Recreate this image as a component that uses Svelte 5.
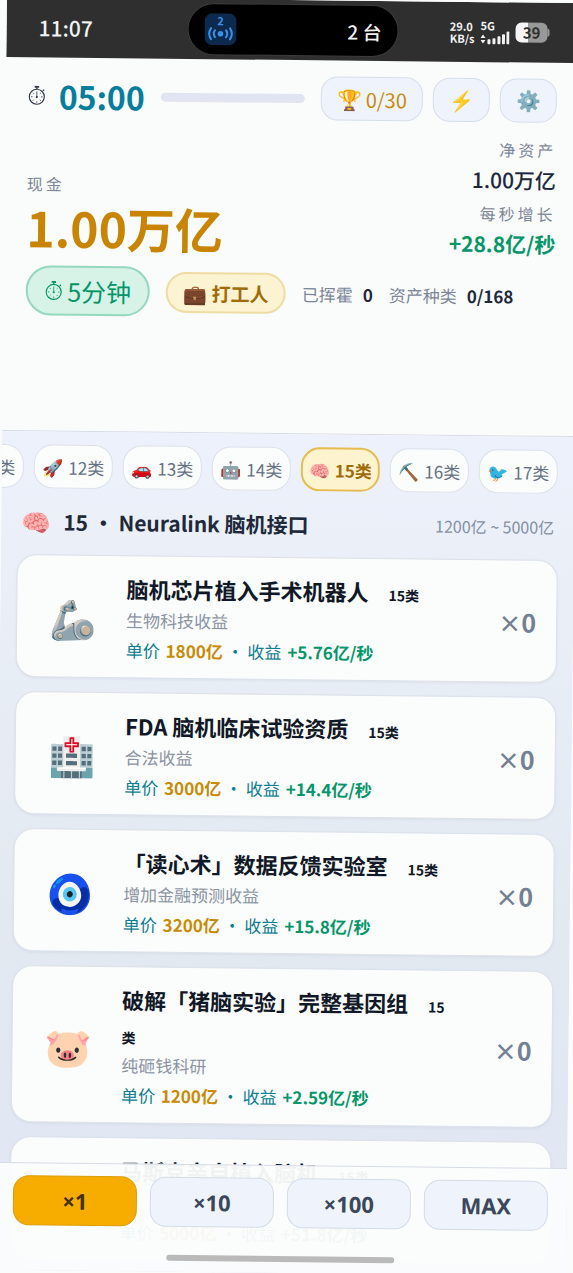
<script>
	const tabs = [
		{ id: 11, icon: '🛰️' },
		{ id: 12, icon: '🚀' },
		{ id: 13, icon: '🚗' },
		{ id: 14, icon: '🤖' },
		{ id: 15, icon: '🧠' },
		{ id: 16, icon: '⛏️' },
		{ id: 17, icon: '🐦' },
	];

	const assets = [
		{ icon: '🦾', name: '脑机芯片植入手术机器人', note: '生物科技收益', price: '1800亿', income: '+5.76亿/秒' },
		{ icon: '🏥', name: 'FDA 脑机临床试验资质', note: '合法收益', price: '3000亿', income: '+14.4亿/秒' },
		{ icon: '🧿', name: '「读心术」数据反馈实验室', note: '增加金融预测收益', price: '3200亿', income: '+15.8亿/秒' },
		{ icon: '🐷', name: '破解「猪脑实验」完整基因组', note: '纯砸钱科研', price: '1200亿', income: '+2.59亿/秒' },
		{ icon: '', name: '马斯克亲自植入脑机', note: '', price: '5000亿', income: '+51.8亿/秒' },
	];

	const amounts = ['×1', '×10', '×100', 'MAX'];

	let activeTab = $state(15);
	let amount = $state('×1');
</script>

{#snippet stopwatch()}
	<svg class="stopwatch" viewBox="0 0 18 20" fill="none" stroke="currentColor" aria-hidden="true">
		<circle cx="9" cy="11.5" r="7.5" stroke-width="1.2" />
		<path d="M9 4V2M15 5.5l1.2-1.2" stroke-width="1.4" />
		<path d="M6.8 1.5h4.4" stroke-width="1.8" />
		<path d="M9 6v5.500M9 16v1.500M3.200 11.500h1.500M13.300 11.500h1.500M5 7.500l1 1M13 7.500l-1 1M5 15.500l1-1M13 15.500l-1-1" stroke-width="0.8" />
		<circle cx="9" cy="11.8" r="1.1" fill="currentColor" stroke="none" />
	</svg>
{/snippet}

<div class="phone" lang="zh-CN">
	<div class="status">
		<span class="clock">11:07</span>
		<div class="island">
			<svg class="hotspot" viewBox="0 0 32 32" aria-hidden="true">
				<rect width="32" height="32" rx="8" fill="#0b2a4d" />
				<text x="16" y="12" text-anchor="middle" font-size="11" font-weight="700" fill="#3b8fe8">2</text>
				<g fill="none" stroke="#3b8fe8" stroke-width="2" stroke-linecap="round">
					<path d="M10.5 17a6 6 0 0 0 0 7M21.5 17a6 6 0 0 1 0 7M6.500 15a10 10 0 0 0 0 11M25.500 15a10 10 0 0 1 0 11" />
				</g>
				<circle cx="16" cy="20.5" r="2.8" fill="#3b8fe8" />
			</svg>
			<span>2 台</span>
		</div>
		<div class="radio">
			<span class="speed">29.0<br />KB/s</span>
			<div class="signal">
				<span>5G</span>
				<svg viewBox="0 0 29 14" fill="#f2f2f2" aria-hidden="true">
					<path d="M0 7L2.5 3.500L5 7zM0 9L2.500 12.500L5 9z" />
					<rect x="7" y="8" width="3" height="5" rx="1" />
					<rect x="12" y="7" width="3" height="6" rx="1" />
					<rect x="17" y="5" width="3" height="8" rx="1" />
					<rect x="21.5" y="3" width="3" height="10" rx="1" />
					<rect x="26" y="0" width="3" height="13" rx="1" />
				</svg>
			</div>
			<span class="battery">39</span>
		</div>
	</div>

	<header>
		<div class="timer-row">
			{@render stopwatch()}
			<strong class="timer">05:00</strong>
			<div class="track"></div>
			<button class="tool trophy"><span class="emoji">🏆</span>0/30</button>
			<button class="tool" aria-label="加速"><span class="emoji">⚡</span></button>
			<button class="tool" aria-label="设置"><span class="emoji">⚙️</span></button>
		</div>

		<div class="money">
			<div class="cash">
				<span class="label">现金</span>
				<strong>1.00万亿</strong>
			</div>
			<div class="worth">
				<span class="label">净资产</span>
				<strong>1.00万亿</strong>
				<span class="label">每秒增长</span>
				<strong class="green">+28.8亿/秒</strong>
			</div>
		</div>

		<div class="badges">
			<span class="mode">{@render stopwatch()}5分钟</span>
			<span class="rank"><span class="emoji">💼</span>打工人</span>
			<span class="stat">已挥霍<b>0</b></span>
			<span class="stat">资产种类<b>0/168</b></span>
		</div>
	</header>

	<main>
		<nav>
			{#each tabs as tab}
				<button class="tab" class:active={tab.id === activeTab} onclick={() => (activeTab = tab.id)}>
					<span class="emoji">{tab.icon}</span>{tab.id}类
				</button>
			{/each}
		</nav>

		<div class="heading">
			<span class="emoji">🧠</span>
			<h2>15 ・ Neuralink 脑机接口</h2>
			<span class="range">1200亿 ~ 5000亿</span>
		</div>

		<div class="list">
			{#each assets as asset}
				<article>
					<span class="emoji">{asset.icon}</span>
					<div class="info">
						<h3>{asset.name}<small>15类</small></h3>
						<p class="note">{asset.note}</p>
						<p class="price">单价 <b>{asset.price}</b> ・ 收益 <b class="green">{asset.income}</b></p>
					</div>
					<span class="count"><i>×</i>0</span>
				</article>
			{/each}
		</div>
	</main>

	<footer>
		<div class="amounts">
			{#each amounts as a}
				<button class:active={a === amount} onclick={() => (amount = a)}>{a}</button>
			{/each}
		</div>
		<div class="home"></div>
	</footer>
</div>

<style>
	:global(body) {
		background: #fafbfb;
		overflow: hidden;
	}

	/* the whole device leans slightly to the right */
	.phone {
		position: relative;
		display: flex;
		flex-direction: column;
		height: 100vh;
		overflow: hidden;
		transform: rotate(0.62deg);
		background: #fafbfb;
		color: #1e293b;
		font-family: 'Noto Sans CJK SC', 'Noto Sans', sans-serif;
	}

	button {
		font-family: inherit;
		padding: 0;
		cursor: pointer;
	}

	h2, h3, p {
		margin: 0;
	}

	.green {
		color: #059669;
	}

	.emoji {
		line-height: 1;
	}

	.stopwatch {
		flex: none;
		width: 18px;
		height: 20px;
	}

	/* status bar */
	.status {
		flex: none;
		display: grid;
		grid-template-columns: 1fr auto 1fr;
		align-items: center;
		height: 60px;
		padding: 0 32px;
		background: #2f2f2f;
		color: #f2f2f2;
	}

	.clock {
		font-size: 21px;
		line-height: 32px;
		font-weight: 500;
	}

	.island {
		box-sizing: border-box;
		display: flex;
		align-items: center;
		justify-content: space-between;
		width: 209px;
		height: 50px;
		padding: 0 16px;
		border-radius: 25px;
		background: #000;
		box-shadow: 0 0 0 1px #3a3a3a;
		font-size: 19px;
		font-weight: 500;
	}

	.hotspot {
		width: 32px;
		height: 32px;
	}

	.radio {
		display: flex;
		align-items: center;
		justify-content: flex-end;
		gap: 6px;
		font-size: 11px;
		line-height: 12px;
		font-weight: 700;
	}

	.signal {
		display: flex;
		flex-direction: column;
	}

	.signal svg {
		width: 29px;
		height: 14px;
	}

	.battery {
		position: relative;
		width: 32px;
		border-radius: 6px;
		background: linear-gradient(90deg, #f5f5f5 39%, #989898 39%);
		color: #2f2f2f;
		font-size: 15px;
		line-height: 20px;
		text-align: center;
	}

	.battery::after {
		content: '';
		position: absolute;
		top: 6px;
		right: -2px;
		width: 2px;
		height: 8px;
		border-radius: 0 2px 2px 0;
		background: #989898;
	}

	/* summary */
	header {
		flex: none;
		box-sizing: border-box;
		min-height: 374px;
		padding: 16px 22px;
		border-bottom: 1px solid #d6dce6;
	}

	.timer-row {
		display: flex;
		align-items: center;
		gap: 10px;
	}

	.timer-row .stopwatch {
		margin-right: 3px;
		color: #333c48;
	}

	.timer {
		color: #067d9c;
		font-size: 32px;
		line-height: 44px;
	}

	.track {
		flex: 1;
		height: 9px;
		margin: 0 6px;
		border-radius: 5px;
		background: #e0e5f1;
	}

	.tool {
		display: flex;
		align-items: center;
		justify-content: center;
		gap: 4px;
		box-sizing: border-box;
		width: 57px;
		height: 44px;
		border: 1px solid #d5dfea;
		border-radius: 17px;
		background: #eff3fb;
		font-size: 20px;
	}

	.trophy {
		width: 102px;
		color: #c98a04;
	}

	.money {
		display: flex;
		justify-content: space-between;
		align-items: flex-end;
		margin-top: 13px;
	}

	.cash,
	.worth {
		display: flex;
		flex-direction: column;
	}

	.cash {
		margin-bottom: 3px;
	}

	.label {
		color: #7c8799;
		font-size: 16px;
		line-height: 28px;
		letter-spacing: 3px;
	}

	.cash strong {
		color: #c98404;
		font-size: 48px;
		line-height: 58px;
	}

	.worth {
		align-items: flex-end;
	}

	.worth strong {
		margin-bottom: 4px;
		font-size: 21px;
		line-height: 32px;
		font-weight: 500;
	}

	.worth .green {
		font-weight: 700;
	}

	.badges {
		display: flex;
		align-items: center;
		gap: 16px;
		margin-top: 7px;
	}

	.mode,
	.rank {
		display: flex;
		align-items: center;
		justify-content: center;
		gap: 5px;
		box-sizing: border-box;
		border-radius: 25px;
	}

	.mode {
		width: 124px;
		height: 50px;
		border: 2px solid #94d8c0;
		background: #d7f3e7;
		color: #059669;
		font-size: 25px;
	}

	.rank {
		width: 120px;
		height: 41px;
		border: 2px solid #efdca4;
		background: #fcf3d2;
		color: #a16c07;
		font-size: 19px;
		font-weight: 700;
	}

	.stat {
		color: #7c8799;
		font-size: 17px;
	}

	.stat b {
		margin-left: 10px;
		color: #1e293b;
	}

	/* asset list */
	main {
		flex: 1;
		min-height: 0;
		overflow: hidden;
		background: linear-gradient(#edf1fb, #e9eef7 20%, #e2e9f1 60%, #e1e6f4);
	}

	nav {
		display: flex;
		justify-content: flex-end;
		gap: 10px;
		padding: 13px 17px 0;
		overflow: hidden;
	}

	.tab {
		flex: none;
		display: flex;
		align-items: center;
		justify-content: center;
		gap: 5px;
		box-sizing: border-box;
		width: 79px;
		height: 44px;
		border: 1px solid #dbe1ea;
		border-radius: 19px;
		background: #fbfcfc;
		color: #667285;
		font-size: 17px;
	}

	.tab.active {
		border: 2px solid #e6bc50;
		background: #fdf3cf;
		color: #a16c07;
		font-weight: 700;
	}

	.heading {
		display: flex;
		align-items: center;
		gap: 12px;
		padding: 17px 20px;
	}

	.heading .emoji {
		width: 30px;
		font-size: 24px;
	}

	h2 {
		flex: 1;
		font-size: 21px;
		line-height: 32px;
	}

	.range {
		color: #8490a2;
		font-size: 16px;
	}

	.list {
		display: flex;
		flex-direction: column;
		gap: 14px;
		padding: 0 16px;
	}

	article {
		display: flex;
		align-items: center;
		padding: 15px 20px 13px 32px;
		border: 1px solid #dce2ea;
		border-radius: 20px;
		background: #fbfcfc;
		box-shadow: 0 1px 3px rgba(30, 41, 59, 0.06);
	}

	article .emoji {
		flex: none;
		width: 46px;
		margin-right: 31px;
		font-size: 38px;
		text-align: center;
	}

	.info {
		flex: 1;
	}

	h3 {
		color: #111827;
		font-size: 22px;
		line-height: 34px;
	}

	h3 small {
		margin-left: 20px;
		font-size: 14px;
		line-height: 1;
	}

	.note {
		min-height: 30px;
		color: #8b94a3;
		font-size: 17px;
		line-height: 30px;
	}

	.price {
		color: #0e7c93;
		font-size: 17px;
		line-height: 29px;
	}

	.price b {
		margin-left: 2px;
	}

	.price b:not(.green) {
		color: #c98a04;
	}

	.count {
		flex: none;
		width: 80px;
		color: #748093;
		font-size: 25px;
		line-height: 30px;
		font-weight: 700;
		text-align: right;
	}

	.count i {
		font-size: 23px;
		font-style: normal;
	}

	/* bottom bar floats over the end of the list */
	footer {
		position: absolute;
		right: 0;
		bottom: 0;
		left: 0;
		padding: 12px 19px 11px;
		border-top: 1px solid #d6dce6;
		background: rgba(251, 252, 252, 0.96);
	}

	.amounts {
		display: flex;
		gap: 13px;
	}

	.amounts button {
		flex: 1;
		height: 50px;
		border: 1px solid #d3dce7;
		border-radius: 16px;
		background: #eff4fc;
		color: #3b475a;
		font-family: 'Noto Sans', sans-serif;
		font-size: 22px;
		font-weight: 700;
	}

	.amounts .active {
		border-color: #dd9d08;
		background: #f7ad00;
		color: #45300a;
	}

	.home {
		width: 228px;
		height: 6px;
		margin: 28px auto 0;
		border-radius: 3px;
		background: #bababa;
	}
</style>
